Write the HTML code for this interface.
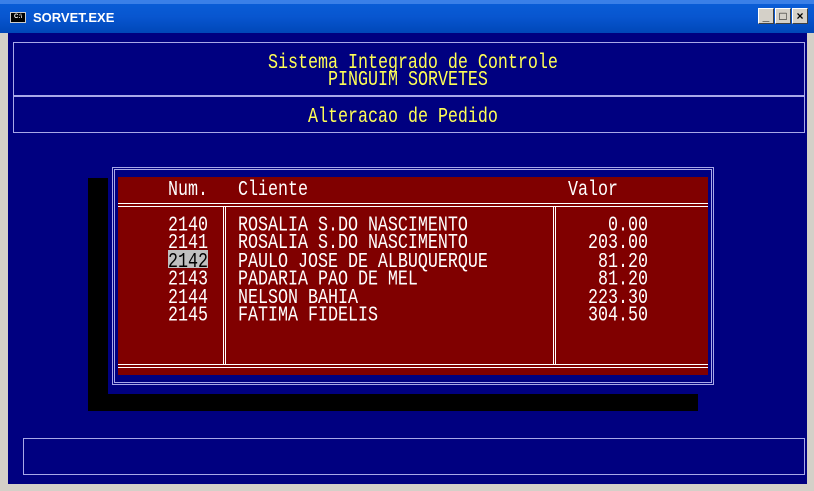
<!DOCTYPE html>
<html><head><meta charset="utf-8"><style>
*{margin:0;padding:0;box-sizing:border-box}
body{width:814px;height:491px;overflow:hidden;background:#d4d0c8;position:relative;font-family:"Liberation Mono",monospace}
.a{position:absolute}
.t{position:absolute;font-size:16.67px;line-height:18px;white-space:pre;transform:scaleY(1.25);transform-origin:0 0;color:#fff}
.m{line-height:14.4px}
.y{color:#ffff55}
.bx{position:absolute;border:1px solid #a8a8e8}
.w{position:absolute;background:#fff}
.btn{position:absolute;top:8px;width:16px;height:16px;background:#d4d0c8;border:1px solid;border-color:#fff #404040 #404040 #fff;font:bold 12px "Liberation Sans",sans-serif;color:#000;text-align:center;line-height:14px}
</style></head><body>
<div class="a" style="left:0;top:0;width:814px;height:33px;background:linear-gradient(#0a5fd8,#0856d0 50%,#0047b8)"></div>
<div class="a" style="left:0;top:0;width:814px;height:4px;background:#3a80e8"></div>
<div class="a" style="left:10px;top:12px;width:16px;height:11px;background:#000;border:1px solid #ccc;color:#fff;font:bold 6px 'Liberation Sans',sans-serif;line-height:9px;text-align:center">C:\</div>
<div class="a" style="left:33px;top:10px;color:#fff;font:bold 13px 'Liberation Sans',sans-serif">SORVET.EXE</div>
<div class="btn" style="left:758px">_</div>
<div class="btn" style="left:775px">□</div>
<div class="btn" style="left:792px">×</div>
<div class="a" style="left:8px;top:33px;width:799px;height:451px;background:#000080"></div>
<div class="bx" style="left:13px;top:42px;width:792px;height:55px"></div>
<div class="bx" style="left:13px;top:95px;width:792px;height:38px"></div>
<div class="bx" style="left:23px;top:438px;width:782px;height:37px"></div>
<div class="t y" style="left:268px;top:53px">Sistema Integrado de Controle</div>
<div class="t y" style="left:328px;top:70px">PINGUIM SORVETES</div>
<div class="t y" style="left:308px;top:107px">Alteracao de Pedido</div>
<div class="a" style="left:88px;top:178px;width:610px;height:233px;background:#000"></div>
<div class="a" style="left:108px;top:163px;width:610px;height:231px;background:#000080"></div>
<div class="bx" style="left:112px;top:167px;width:602px;height:218px"></div>
<div class="bx" style="left:114px;top:169px;width:598px;height:214px"></div>
<div class="a" style="left:118px;top:177px;width:590px;height:198px;background:#800000"></div>
<div class="w" style="left:118px;top:203px;width:590px;height:1px"></div>
<div class="w" style="left:118px;top:206px;width:590px;height:1px"></div>
<div class="w" style="left:118px;top:364px;width:590px;height:1px"></div>
<div class="w" style="left:118px;top:367px;width:590px;height:1px"></div>
<div class="w" style="left:223px;top:206px;width:1px;height:159px"></div>
<div class="w" style="left:225px;top:206px;width:1px;height:159px"></div>
<div class="w" style="left:553px;top:206px;width:1px;height:159px"></div>
<div class="w" style="left:555px;top:206px;width:1px;height:159px"></div>
<div class="t" style="left:168px;top:180px">Num.</div>
<div class="t" style="left:238px;top:180px">Cliente</div>
<div class="t" style="left:568px;top:180px">Valor</div>
<div class="a" style="left:168px;top:250px;width:40px;height:18px;background:#c0c0c0"></div>
<div class="t m" style="left:168px;top:218px">2140
2141
<span style="color:#000">2142</span>
2143
2144
2145</div>
<div class="t m" style="left:238px;top:218px">ROSALIA S.DO NASCIMENTO
ROSALIA S.DO NASCIMENTO
PAULO JOSE DE ALBUQUERQUE
PADARIA PAO DE MEL
NELSON BAHIA
FATIMA FIDELIS</div>
<div class="t m" style="left:588px;top:218px;text-align:right;width:60px">  0.00
203.00
 81.20
 81.20
223.30
304.50</div>
</body></html>
